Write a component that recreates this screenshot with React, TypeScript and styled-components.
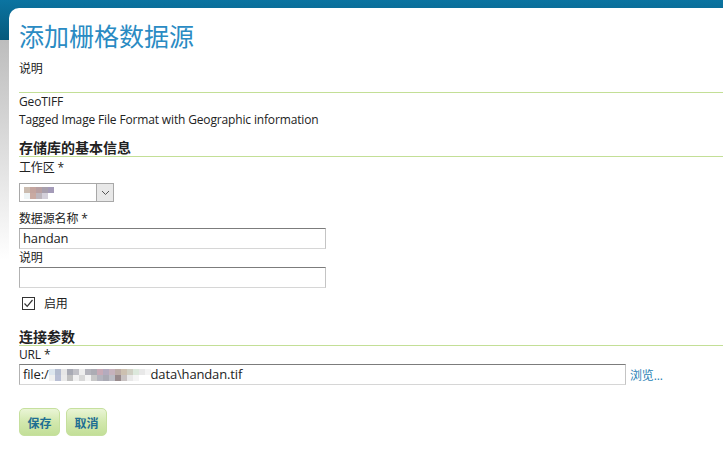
import React from "react";
import styled, { createGlobalStyle } from "styled-components";

const Global = createGlobalStyle`
  html, body { margin: 0; padding: 0; background: #fff; }
  body { font-family: "Open Sans", "Noto Sans CJK SC", sans-serif; font-size: 12px; color: #222; letter-spacing: -0.15px; }
  * { box-sizing: border-box; }
`;

const Page = styled.div`
  width: 723px;
  height: 458px;
  overflow: hidden;
  padding: 8px 0 0 9px;
  background:
    linear-gradient(to bottom, #0b74a1 0px, #06597c 40px, transparent 40px),
    linear-gradient(to bottom, #bdbdbd 0px, #d4d4d4 80px, #ffffff 220px),
    #fff;
  background-repeat: no-repeat;
  background-size: 100% 100%, 9px 220px, 100% 100%;
  background-position: 0 0, 0 40px, 0 0;
`;

const Panel = styled.div`
  height: 100%;
  background: #fff;
  border-top-left-radius: 10px;
  padding: 12px 0 0 10px;
  display: flex;
  flex-direction: column;
`;

const Title = styled.h1`
  margin: 0;
  font-family: "Noto Sans CJK SC", sans-serif;
  font-weight: 400;
  font-size: 25px;
  line-height: 30px;
  letter-spacing: 0;
  color: #2a8bc3;
`;

const Text = styled.div<{ $mt?: number }>`
  line-height: 18px;
  margin-top: ${(p) => p.$mt ?? 0}px;
  white-space: nowrap;
`;

const Rule = styled.div<{ $mt?: number }>`
  height: 1px;
  background: #c3df96;
  margin-top: ${(p) => p.$mt ?? 0}px;
`;

const SectionTitle = styled.h2<{ $mt?: number }>`
  margin: ${(p) => p.$mt ?? 0}px 0 0 0;
  font-size: 14px;
  font-weight: 700;
  line-height: 18px;
  letter-spacing: 0;
  color: #222;
  font-family: "Noto Sans CJK SC", sans-serif;
`;

const Label = styled.label<{ $mt?: number }>`
  display: block;
  line-height: 18px;
  margin-top: ${(p) => p.$mt ?? 0}px;
`;

const SelectBox = styled.div`
  margin-top: 6px;
  width: 95px;
  height: 19px;
  border: 1px solid #a8a8a8;
  display: flex;
  align-items: stretch;
`;

const SelectValue = styled.div`
  flex: 1;
  display: flex;
  align-items: center;
  padding-left: 4px;
`;

const SelectArrow = styled.div`
  width: 17px;
  border-left: 1px solid #a8a8a8;
  background: #e8e8e8;
  display: flex;
  align-items: center;
  justify-content: center;
`;

const Mosaic = styled.span<{ $cols: number }>`
  display: inline-grid;
  grid-template-columns: repeat(${(p) => p.$cols}, 6px);
  grid-template-rows: 6px 6px;
  vertical-align: middle;
  flex: none;
`;

const Cell = styled.span<{ $c: string }>`
  display: block;
  width: 6px;
  height: 6px;
  background: ${(p) => p.$c};
`;

const Input = styled.div<{ $w: number }>`
  width: ${(p) => p.$w}px;
  height: 21px;
  border: 1px solid;
  border-color: #7c7c7c #c4c4c4 #d6d6d6 #b2b2b2;
  padding: 0 3px;
  font-size: 13px;
  line-height: 19px;
  white-space: nowrap;
  display: flex;
  align-items: center;
`;

const CheckRow = styled.div`
  margin-top: 6px;
  height: 18px;
  display: flex;
  align-items: center;
  gap: 9px;
  padding-left: 3px;
`;

const CheckBox = styled.span`
  width: 13px;
  height: 13px;
  border: 1px solid #333;
  display: inline-flex;
  align-items: center;
  justify-content: center;
  background: #fff;
`;

const UrlRow = styled.div`
  display: flex;
  align-items: center;
  gap: 4px;
`;

const Browse = styled.a`
  color: #2a7fb5;
  text-decoration: none;
  font-size: 12px;
`;

const Buttons = styled.div`
  margin-top: 23px;
  display: flex;
  gap: 6px;
`;

const Button = styled.button`
  width: 41px;
  height: 28px;
  border: 1px solid #c6e09e;
  border-radius: 5px;
  background: linear-gradient(to bottom, #eaf5d6 0%, #d2e8ae 50%, #c3df98 100%);
  color: #1f6f93;
  font-weight: 700;
  font-size: 12px;
  font-family: "Noto Sans CJK SC", sans-serif;
  padding: 0;
  cursor: pointer;
`;

const selectCells = [
  "#cbbcb0", "#c4a59f", "#b8a0a2", "#a8a0ad", "#a49bb8",
  "#eef4f6", "#c9aaa2", "#bdb6bd", "#d4d0da", "#ffffff",
];

const urlCells = [
  "#dde6ee", "#b4bccf", "#e6e6e6", "#a8aab4", "#c0c0c6", "#eeeeee", "#b4b4bc", "#acacb4", "#c8aab6", "#b4abbe", "#c6b2bc", "#bcaca6", "#ccc0b0", "#d0d0c4", "#dce8dc", "#e8e8e8", "#f4f4f4",
  "#f0f0f0", "#b8bed4", "#eaeaea", "#c0c0c0", "#f0f0f0", "#d8d8d8", "#f4f4f4", "#c8c8c8", "#b4b4be", "#aaaab4", "#bcbcc4", "#988a8c", "#c8c2c2", "#e8e8e8", "#f4f4f4", "#ffffff", "#ffffff",
];

export default function App() {
  return (
    <>
      <Global />
      <Page>
        <Panel>
          <Title>添加栅格数据源</Title>
          <Text $mt={10}>说明</Text>
          <Rule $mt={14} />
          <Text>GeoTIFF</Text>
          <Text>Tagged Image File Format with Geographic information</Text>
          <SectionTitle $mt={9}>存储库的基本信息</SectionTitle>
          <Rule />
          <Label $mt={2}>工作区 *</Label>
          <SelectBox>
            <SelectValue>
              <Mosaic $cols={5}>
                {selectCells.map((c, i) => (
                  <Cell key={i} $c={c} />
                ))}
              </Mosaic>
            </SelectValue>
            <SelectArrow>
              <svg width="9" height="6" viewBox="0 0 9 6">
                <path d="M1 1 L4.5 4.5 L8 1" fill="none" stroke="#555" strokeWidth="1" />
              </svg>
            </SelectArrow>
          </SelectBox>
          <Label $mt={8}>数据源名称 *</Label>
          <Input $w={307}>handan</Input>
          <Label>说明</Label>
          <Input $w={307} />
          <CheckRow>
            <CheckBox>
              <svg width="11" height="11" viewBox="0 0 11 11">
                <path d="M1.5 5.5 L4.2 8.3 L9.5 2" fill="none" stroke="#333" strokeWidth="1.2" />
              </svg>
            </CheckBox>
            <span>启用</span>
          </CheckRow>
          <SectionTitle $mt={15}>连接参数</SectionTitle>
          <Rule />
          <Label>URL *</Label>
          <UrlRow>
            <Input $w={607}>
              file:/
              <Mosaic $cols={17}>
                {urlCells.map((c, i) => (
                  <Cell key={i} $c={c} />
                ))}
              </Mosaic>
              data\handan.tif
            </Input>
            <Browse href="#">浏览...</Browse>
          </UrlRow>
          <Buttons>
            <Button>保存</Button>
            <Button>取消</Button>
          </Buttons>
        </Panel>
      </Page>
    </>
  );
}
